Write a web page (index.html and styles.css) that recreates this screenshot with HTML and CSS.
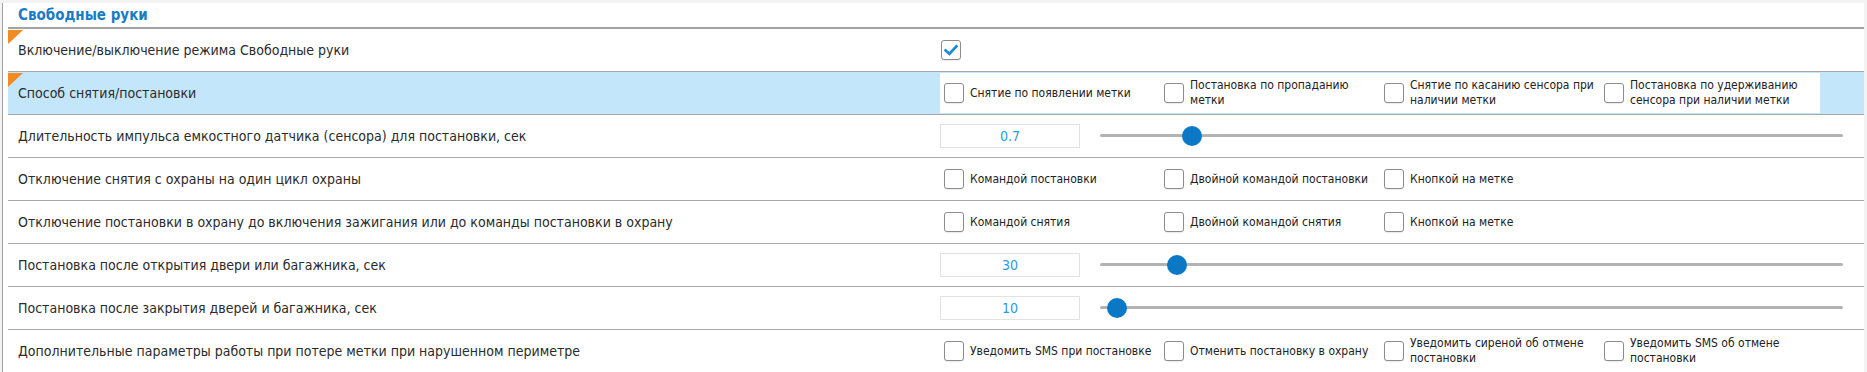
FILE: index.html
```html
<!DOCTYPE html>
<html>
<head>
<meta charset="utf-8">
<title>Свободные руки</title>
<link rel="stylesheet" href="styles.css">
</head>
<body>
<div class="panel">
  <div class="panel-title">Свободные руки</div>

  <div class="row changed">
    <div class="label">Включение/выключение режима Свободные руки</div>
    <div class="control">
      <span class="check on"><svg viewBox="0 0 20 20"><path d="M4 10.5 L8.2 14.2 L16 6" /></svg></span>
    </div>
  </div>

  <div class="row changed selected">
    <div class="label">Способ снятия/постановки</div>
    <div class="control">
      <div class="options boxed">
        <label class="opt"><span class="check"></span><span class="opt-text">Снятие по появлении метки</span></label>
        <label class="opt"><span class="check"></span><span class="opt-text">Постановка по пропаданию метки</span></label>
        <label class="opt"><span class="check"></span><span class="opt-text">Снятие по касанию сенсора при наличии метки</span></label>
        <label class="opt"><span class="check"></span><span class="opt-text">Постановка по удерживанию сенсора при наличии метки</span></label>
      </div>
    </div>
  </div>

  <div class="row">
    <div class="label">Длительность импульса емкостного датчика (сенсора) для постановки, сек</div>
    <div class="control">
      <div class="num">0.7</div>
      <div class="slider"><div class="track"></div><div class="thumb" style="--pos: 0.113"></div></div>
    </div>
  </div>

  <div class="row">
    <div class="label">Отключение снятия с охраны на один цикл охраны</div>
    <div class="control">
      <div class="options">
        <label class="opt"><span class="check"></span><span class="opt-text">Командой постановки</span></label>
        <label class="opt"><span class="check"></span><span class="opt-text">Двойной командой постановки</span></label>
        <label class="opt"><span class="check"></span><span class="opt-text">Кнопкой на метке</span></label>
      </div>
    </div>
  </div>

  <div class="row">
    <div class="label">Отключение постановки в охрану до включения зажигания или до команды постановки в охрану</div>
    <div class="control">
      <div class="options">
        <label class="opt"><span class="check"></span><span class="opt-text">Командой снятия</span></label>
        <label class="opt"><span class="check"></span><span class="opt-text">Двойной командой снятия</span></label>
        <label class="opt"><span class="check"></span><span class="opt-text">Кнопкой на метке</span></label>
      </div>
    </div>
  </div>

  <div class="row">
    <div class="label">Постановка после открытия двери или багажника, сек</div>
    <div class="control">
      <div class="num">30</div>
      <div class="slider"><div class="track"></div><div class="thumb" style="--pos: 0.093"></div></div>
    </div>
  </div>

  <div class="row">
    <div class="label">Постановка после закрытия дверей и багажника, сек</div>
    <div class="control">
      <div class="num">10</div>
      <div class="slider"><div class="track"></div><div class="thumb" style="--pos: 0.010"></div></div>
    </div>
  </div>

  <div class="row">
    <div class="label">Дополнительные параметры работы при потере метки при нарушенном периметре</div>
    <div class="control">
      <div class="options">
        <label class="opt"><span class="check"></span><span class="opt-text">Уведомить SMS при постановке</span></label>
        <label class="opt"><span class="check"></span><span class="opt-text">Отменить постановку в охрану</span></label>
        <label class="opt"><span class="check"></span><span class="opt-text">Уведомить сиреной об отмене постановки</span></label>
        <label class="opt"><span class="check"></span><span class="opt-text">Уведомить SMS об отмене постановки</span></label>
      </div>
    </div>
  </div>
</div>
</body>
</html>
```

FILE: styles.css
```css
body { margin:0; background:#f3f3f3; color:#2b2b2b;
  font-family:"DejaVu Sans Condensed", "DejaVu Sans", sans-serif; font-stretch:condensed; font-size:14px; }

.panel { margin:3px 3px 0 2px; padding-left:5px; background:#fff; border-left:1px solid #a0a0a0; height:369px; overflow:hidden; }

.panel-title { height:24px; line-height:24px; padding-left:10px; border-bottom:2px solid #a3a3a3;
  color:#1a7cc6; font-weight:bold; font-size:15px; }

.row { position:relative; display:flex; align-items:center; height:42px; border-bottom:1px solid #a8a8a8; }
.row.selected { background:#c4e6fa; }
.row.changed::before { content:""; position:absolute; left:0; top:1px; width:0; height:0;
  border-top:14px solid #f28a22; border-right:15px solid transparent; }

.label { width:922px; padding-left:10px; flex:none; }
.control { flex:1; display:flex; align-items:center; height:100%; }

.check { flex:none; display:inline-block; width:18px; height:18px; border:1px solid #8c8c8c; border-radius:3px; background:#fff;
  box-shadow:0 1px 1px rgba(0,0,0,0.08); }
.check svg { width:18px; height:18px; display:block; }
.check svg path { fill:none; stroke:#1b8bd6; stroke-width:3; stroke-linecap:square; }
.check.on { margin-left:1px; }

.options { display:flex; align-items:center; height:40px; }
.options.boxed { background:#fff; }
.opt { width:216px; padding-left:4px; display:flex; align-items:center; font-size:12px; line-height:15px; color:#222; }
.opt .check { margin-right:6px; }
.opt-text { max-width:186px; }

.num { flex:none; width:138px; height:22px; line-height:22px; border:1px solid #e2e2e2; text-align:center; color:#2a9be0; font-size:14px; }

.slider { position:relative; flex:1; height:20px; margin:0 21px 0 20px; }
.track { position:absolute; left:0; right:0; top:8px; height:3px; border-radius:2px; background:#b3b3b3; }
.thumb { position:absolute; top:0; width:20px; height:20px; border-radius:50%; background:#0a78c4;
  left:calc((100% - 20px) * var(--pos)); }
```
